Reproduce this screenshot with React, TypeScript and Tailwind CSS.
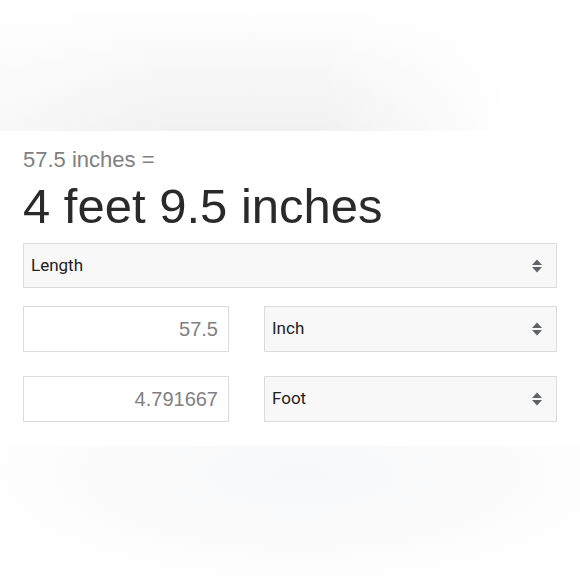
function Arrows() {
  return (
    <svg width="14" height="18" viewBox="0 0 14 18" className="shrink-0">
      <path d="M2 8 L7 2.5 L12 8 Z" fill="#5f6368" />
      <path d="M2 10 L7 15.5 L12 10 Z" fill="#5f6368" />
    </svg>
  )
}

function SelectBox({ label, className = '' }: { label: string; className?: string }) {
  return (
    <div
      className={`flex items-center justify-between border border-[#dcdcdc] bg-[#f8f8f8] pl-[7px] pr-[12px] font-['Roboto',sans-serif] text-[17px] text-[#222] ${className}`}
    >
      <span>{label}</span>
      <Arrows />
    </div>
  )
}

function NumberBox({ value }: { value: string }) {
  return (
    <div className="flex h-[46px] w-[206px] shrink-0 items-center justify-end border border-[#dcdcdc] bg-white pr-[10px] font-['Liberation_Sans',Arial,sans-serif] text-[20px] text-[#808080]">
      {value}
    </div>
  )
}

export default function App() {
  return (
    <div className="flex h-[580px] w-[580px] flex-col bg-white">
      {/* faded header area */}
      <div className="h-[131px] shrink-0 bg-[linear-gradient(to_right,rgba(255,255,255,0.5)_0%,rgba(255,255,255,0)_30%,rgba(255,255,255,0)_55%,#ffffff_88%),linear-gradient(to_bottom,#ffffff_0%,#f9f9f9_45%,#f1f1f1_100%)]" />

      <div className="flex flex-col px-[23px]">
        <div className="mt-[17px] font-['Liberation_Sans',Arial,sans-serif] text-[22px] leading-[24px] text-[#808080]">
          57.5 inches =
        </div>
        <div className="mt-[5px] font-['Liberation_Sans',Arial,sans-serif] text-[49px] leading-[58px] text-[#2a2a2a]">
          4 feet 9.5 inches
        </div>

        <SelectBox label="Length" className="mt-[8px] h-[45px]" />

        <div className="mt-[18px] flex gap-[35px]">
          <NumberBox value="57.5" />
          <SelectBox label="Inch" className="h-[46px] flex-1" />
        </div>
        <div className="mt-[24px] flex gap-[35px]">
          <NumberBox value="4.791667" />
          <SelectBox label="Foot" className="h-[46px] flex-1" />
        </div>
      </div>

      {/* faint shadow below */}
      <div className="mt-[24px] flex-1 bg-[radial-gradient(ellipse_60%_90%_at_52%_20%,#f7f8f9_0%,#fafafb_50%,#ffffff_100%)]" />
    </div>
  )
}
